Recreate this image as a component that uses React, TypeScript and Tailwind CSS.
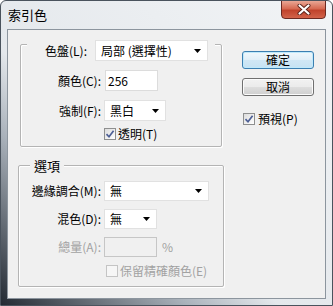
import React from "react"

function Arrow() {
  return (
    <svg width="7" height="4" viewBox="0 0 7 4" className="shrink-0">
      <path d="M0 0h7L3.5 4z" fill="#000" />
    </svg>
  )
}

function Combo({ text, w }: { text: string; w: string }) {
  return (
    <div className={`${w} h-[21px] bg-white border border-[#e1e1e1] flex items-center pl-[5px] pr-[6px]`}>
      <span className="flex-1 text-[12px] leading-none">{text}</span>
      <Arrow />
    </div>
  )
}

function CheckBox({ checked, disabled }: { checked?: boolean; disabled?: boolean }) {
  return (
    <div
      className={
        disabled
          ? "w-[12px] h-[12px] border border-[#c4c4c4] bg-[#f6f6f6]"
          : "w-[12px] h-[12px] border border-[#8e8f8f] bg-[linear-gradient(135deg,#dcdcdc,#ffffff)] flex items-center justify-center"
      }
    >
      {checked && (
        <svg width="10" height="10" viewBox="0 0 10 10">
          <path d="M1.5 5.2 L4 7.8 L8.6 1.8" fill="none" stroke="#4d5f95" strokeWidth="1.7" />
        </svg>
      )}
    </div>
  )
}

export default function App() {
  return (
    <div className="w-[333px] h-[306px] flex flex-col border border-[#4a535d] rounded-t-[6px] overflow-hidden bg-[linear-gradient(to_bottom_left,#f2f4f6_0%,#e4e8ec_58%,#a9b1ba_72%,#232a33_100%)] font-['Noto_Sans_CJK_TC',sans-serif] text-black">
      {/* Title bar */}
      <div className="h-[28px] flex items-start justify-between pl-[7px] pr-[6px]">
        <span className="mt-[6px] text-[13px] leading-[16px]">索引色</span>
        <div className="-mt-[1px] w-[45px] h-[19px] rounded-b-[4px] border border-[#6b2a22] bg-[linear-gradient(to_bottom,#e9a795_0%,#d66a52_45%,#c0432c_55%,#d2634a_100%)] flex items-center justify-center">
          <svg width="14" height="11" viewBox="0 0 14 11">
            <path d="M2.5 1.5 L11.5 9.5 M11.5 1.5 L2.5 9.5" stroke="#5a2219" strokeWidth="4" strokeLinecap="round" />
            <path d="M2.5 1.5 L11.5 9.5 M11.5 1.5 L2.5 9.5" stroke="#ffffff" strokeWidth="2.2" strokeLinecap="round" />
          </svg>
        </div>
      </div>

      {/* Client area */}
      <div className="flex-1 ml-[6px] mr-[6px] mb-[6px] border border-[#8c959e] bg-[#f0f0f0] flex text-[12px]">
        {/* Left column */}
        <div className="pl-[10px] pt-[14px] flex flex-col">
          {/* Group 1 */}
          <div className="ml-[2px] w-[202px] h-[103px] border border-[#b4b4b4] rounded-[2px] shadow-[inset_1px_1px_0_#ffffff,1px_1px_0_#ffffff] flex flex-col">
            <div className="-mt-[5px] ml-[6px] w-[188px] h-[21px] bg-[#f0f0f0] flex items-center">
              <span className="w-[60px] text-right leading-none">色盤(L):</span>
              <div className="ml-[8px]">
                <Combo text="局部 (選擇性)" w="w-[113px]" />
              </div>
            </div>
            <div className="mt-[9px] h-[21px] flex items-center">
              <span className="w-[80px] text-right leading-none">顏色(C):</span>
              <div className="ml-[4px] w-[53px] h-[21px] bg-white border border-[#dcdcdc] flex items-center pl-[2px] leading-none">
                256
              </div>
            </div>
            <div className="mt-[9px] h-[21px] flex items-center">
              <span className="w-[80px] text-right leading-none">強制(F):</span>
              <div className="ml-[3px]">
                <Combo text="黑白" w="w-[62px]" />
              </div>
            </div>
            <div className="mt-[7px] h-[12px] flex items-center pl-[83px]">
              <CheckBox checked />
              <span className="ml-[2px] leading-none">透明(T)</span>
            </div>
          </div>

          {/* Group 2 */}
          <div className="mt-[18px] w-[206px] h-[122px] border border-[#b4b4b4] rounded-[2px] shadow-[inset_1px_1px_0_#ffffff,1px_1px_0_#ffffff] flex flex-col">
            <div className="-mt-[9px] ml-[11px] self-start h-[16px] px-[4px] bg-[#f0f0f0] flex items-center text-[13px] leading-none">
              選項
            </div>
            <div className="mt-[8px] h-[20px] flex items-center">
              <span className="w-[82px] text-right leading-none whitespace-nowrap">邊緣調合(M):</span>
              <div className="ml-[3px]">
                <Combo text="無" w="w-[105px] !h-[20px]" />
              </div>
            </div>
            <div className="mt-[8px] h-[20px] flex items-center">
              <span className="w-[82px] text-right leading-none">混色(D):</span>
              <div className="ml-[3px]">
                <Combo text="無" w="w-[53px] !h-[20px]" />
              </div>
            </div>
            <div className="mt-[8px] h-[20px] flex items-center text-[#a2a2a2]">
              <span className="w-[82px] text-right leading-none">總量(A):</span>
              <div className="ml-[3px] w-[53px] h-[20px] border border-[#c6c6c6] bg-[#f0f0f0]" />
              <span className="ml-[5px] leading-none">%</span>
            </div>
            <div className="mt-[8px] h-[12px] flex items-center pl-[87px] text-[#a2a2a2]">
              <CheckBox disabled />
              <span className="ml-[2px] leading-none whitespace-nowrap">保留精確顏色(E)</span>
            </div>
          </div>
        </div>

        {/* Right column */}
        <div className="ml-[18px] pt-[21px] flex flex-col">
          <div className="w-[72px] h-[18px] rounded-[3px] border border-[#3c7fb1] shadow-[inset_0_0_0_1px_#bfe9fb] bg-[linear-gradient(to_bottom,#f1f8fc_0%,#e1eff8_48%,#d0e7f5_52%,#c6e2f3_100%)] flex items-center justify-center leading-none">
            確定
          </div>
          <div className="mt-[9px] w-[72px] h-[18px] rounded-[3px] border border-[#707070] shadow-[inset_0_0_0_1px_#fbfbfb] bg-[linear-gradient(to_bottom,#f2f2f2_0%,#ebebeb_48%,#dddddd_52%,#cfcfcf_100%)] flex items-center justify-center leading-none">
            取消
          </div>
          <div className="mt-[17px] ml-[1px] h-[12px] flex items-center">
            <CheckBox checked />
            <span className="ml-[3px] leading-none">預視(P)</span>
          </div>
        </div>
      </div>
    </div>
  )
}
